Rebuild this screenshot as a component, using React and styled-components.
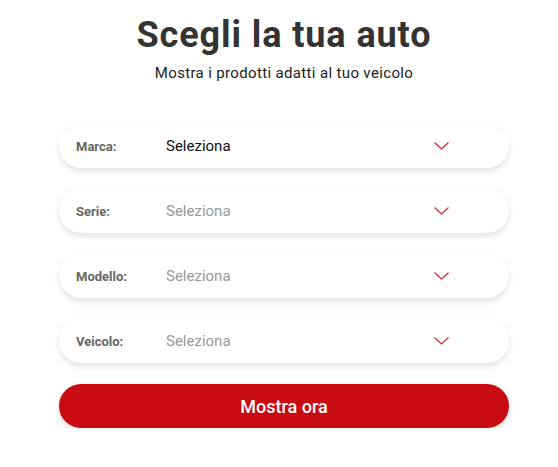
import styled, { createGlobalStyle } from 'styled-components'

const GlobalStyle = createGlobalStyle`
  body {
    margin: 0;
    background: #fff;
    font-family: Roboto, "Noto Sans", sans-serif;
  }
`

const fields = [
  { label: 'Marca:', active: true },
  { label: 'Serie:' },
  { label: 'Modello:' },
  { label: 'Veicolo:' },
]

const Chevron = () => (
  <svg width="15" height="8" viewBox="0 0 15 8" fill="none">
    <path d="M0.5 0.5 L7.5 7 L14.5 0.5" stroke="#d0222d" strokeWidth="1.1" />
  </svg>
)

const App = () => {
  return (
    <Wrapper>
      <GlobalStyle />
      <Title>Scegli la tua auto</Title>
      <Subtitle>Mostra i prodotti adatti al tuo veicolo</Subtitle>
      <Form onSubmit={(e) => e.preventDefault()}>
        {fields.map((f) => (
          <Field key={f.label} type="button">
            <Label>{f.label}</Label>
            <Value $active={f.active}>Seleziona</Value>
            <Arrow><Chevron /></Arrow>
          </Field>
        ))}
        <Submit type="submit">Mostra ora</Submit>
      </Form>
    </Wrapper>
  )
}

const Wrapper = styled.section`
  width: 450px;
  margin-left: 59px;
  padding-top: 13px;
`

const Title = styled.h1`
  margin: 0;
  text-align: center;
  font-size: 36px;
  font-weight: 700;
  letter-spacing: 0.9px;
  color: #333;
  line-height: 44px;
`

const Subtitle = styled.p`
  margin: 6px 0 0;
  text-align: center;
  font-size: 15px;
  letter-spacing: 0.35px;
  color: #222;
  line-height: 20px;
`

const Form = styled.form`
  margin-top: 41px;
  display: flex;
  flex-direction: column;
  gap: 21px;
`

const Field = styled.button`
  display: flex;
  align-items: center;
  height: 44px;
  padding: 0 0 0 17px;
  border: none;
  border-radius: 22px;
  background: #fff;
  box-shadow: 0 3px 6px rgba(0, 0, 0, 0.12);
  font-family: inherit;
  cursor: pointer;
  text-align: left;
`

const Label = styled.span`
  width: 90px;
  font-size: 13px;
  font-weight: 700;
  color: #666;
`

const Value = styled.span`
  flex: 1;
  font-size: 15px;
  color: ${(p) => (p.$active ? '#111' : '#999')};
`

const Arrow = styled.span`
  display: flex;
  width: 15px;
  margin-right: 60px;
  margin-bottom: 1px;
`

const Submit = styled.button`
  height: 44px;
  border: none;
  border-radius: 22px;
  background: #c80b11;
  color: #fff;
  font-family: inherit;
  font-size: 18px;
  font-weight: 500;
  box-shadow: 0 3px 6px rgba(0, 0, 0, 0.15);
  cursor: pointer;
`

export default App
